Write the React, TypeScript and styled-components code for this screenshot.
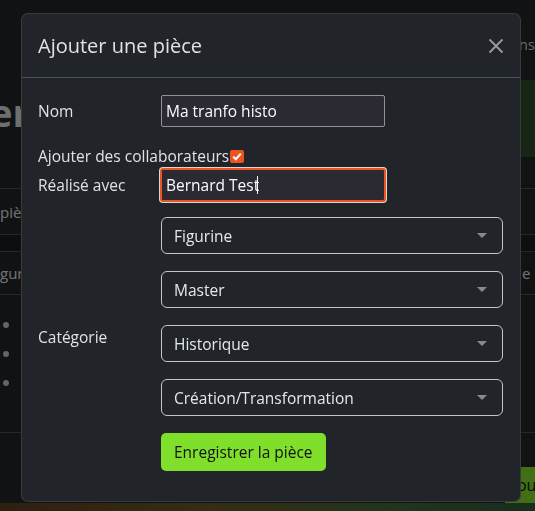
import React from 'react';
import styled, { createGlobalStyle } from 'styled-components';

const GlobalStyle = createGlobalStyle`
  html, body {
    margin: 0;
    background: #222428;
    font-family: "Open Sans", "Noto Sans", sans-serif;
    color: #dee2e6;
    overflow: hidden;
  }
  * { box-sizing: border-box; }
`;

/* ---------- page behind the modal ---------- */

const Page = styled.div`
  width: 535px;
  height: 511px;
  display: flex;
  flex-direction: column;
`;

const NavBar = styled.div`
  height: 80px;
  display: flex;
  justify-content: flex-end;
  padding-top: 34px;
  font-size: 15px;
  color: #d6d6d6;
`;

const Hero = styled.div`
  height: 109px;
  border-bottom: 1px solid #4a4e53;
  display: flex;
  align-items: flex-start;
  justify-content: space-between;
  padding-top: 6px;
  background: linear-gradient(90deg, transparent 94%, #2e4a2a 94%) top / 100% 77px no-repeat;
`;

const HeroTitle = styled.h1`
  margin: 0 0 0 -10px;
  font-size: 38px;
  line-height: 52px;
  font-weight: 700;
  color: #dcdcdc;
`;

const Row = styled.div<{ $h: number; $dark?: boolean }>`
  height: ${p => p.$h}px;
  border-bottom: 1px solid #4a4e53;
  display: flex;
  align-items: center;
  justify-content: space-between;
  font-size: 15px;
  color: #e6e6e6;
  background: ${p => (p.$dark ? '#1b1c1f' : 'transparent')};
`;

const Crumb = styled.span`
  margin-right: -8px;
`;

const List = styled.ul`
  height: 138px;
  margin: 0;
  padding: 22px 0 0 0;
  border-bottom: 1px solid #4a4e53;
  list-style: none;
  display: flex;
  flex-direction: column;
  gap: 13px;
`;

const Bullet = styled.li`
  display: flex;
  align-items: center;
  height: 16px;
  &::before {
    content: '';
    width: 6px;
    height: 6px;
    margin-left: 3px;
    border-radius: 50%;
    background: #c8c8c8;
  }
`;

const ActionRow = styled.div`
  height: 70px;
  display: flex;
  align-items: flex-end;
  justify-content: flex-end;
`;

const PageButton = styled.div`
  height: 36px;
  width: 80px;
  margin-right: -50px;
  background: #80df2a;
  color: #111;
  display: flex;
  align-items: center;
  padding-left: 4px;
  font-size: 16px;
`;

const PageFooter = styled.div`
  flex: 1;
  background: linear-gradient(90deg, #5e4022 0%, #6a5a2a 40%, #3f6a38 75%, #2f5a3c 100%);
`;

/* ---------- modal ---------- */

const Backdrop = styled.div`
  position: fixed;
  inset: 0;
  background: rgba(0, 0, 0, 0.5);
  padding: 13px 0 0 21px;
`;

const Dialog = styled.div`
  width: 500px;
  background: #212529;
  border: 1px solid rgba(255, 255, 255, 0.1);
  border-radius: 7px;
  font-size: 15.5px;
`;

const Header = styled.div`
  display: flex;
  align-items: center;
  justify-content: space-between;
  padding: 16px;
  border-bottom: 1px solid #495057;
`;

const Title = styled.h5`
  margin: 0;
  font-size: 20px;
  font-weight: 500;
  line-height: 31px;
  color: #dee2e6;
`;

const CloseButton = styled.button`
  width: 16px;
  height: 16px;
  padding: 0;
  margin-top: 1px;
  border: 0;
  background: none;
  display: flex;
  cursor: pointer;
`;

const Body = styled.form`
  padding: 17px 17px 30px 16px;
  display: flex;
  flex-direction: column;
`;

const FieldRow = styled.div<{ $top?: number }>`
  display: grid;
  grid-template-columns: 123px 1fr;
  align-items: center;
  margin-top: ${p => p.$top ?? 0}px;
`;

const Label = styled.label<{ $top?: number }>`
  line-height: 24px;
  color: #dee2e6;
  align-self: ${p => (p.$top !== undefined ? 'start' : 'center')};
  margin-top: ${p => p.$top ?? 0}px;
`;

const InputWrap = styled.div`
  position: relative;
  width: 224px;
`;

const TextInput = styled.input<{ $focused?: boolean }>`
  width: 224px;
  height: 32px;
  padding: 0 4px;
  font: inherit;
  color: #fbfbfe;
  background: #2b2a33;
  border: 1px solid ${p => (p.$focused ? '#e95420' : '#8f8f9d')};
  border-radius: 2px;
  box-shadow: ${p => (p.$focused ? '0 0 0 1px #e95420, 0 0 0 2px #d8d8d8' : 'none')};
  outline: none;
  caret-color: transparent;
`;

const Caret = styled.span<{ $x: number }>`
  position: absolute;
  left: ${p => p.$x}px;
  top: 7px;
  width: 1px;
  height: 18px;
  background: #fff;
  pointer-events: none;
`;

const CheckLine = styled.div`
  display: flex;
  align-items: center;
  margin-top: 17px;
  line-height: 24px;
`;

const CheckBox = styled.span`
  width: 14px;
  height: 13px;
  margin-left: 1px;
  margin-top: 1px;
  border-radius: 2px;
  background: #e95420;
  display: flex;
  align-items: center;
  justify-content: center;
`;

const SelectStack = styled.div`
  display: flex;
  flex-direction: column;
  gap: 17px;
`;

const Select = styled.div`
  height: 37px;
  border: 1px solid #c4c4c4;
  border-radius: 6px;
  padding: 0 15px 0 12px;
  display: flex;
  align-items: center;
  justify-content: space-between;
  color: #e4e8ec;

  &::after {
    content: '';
    border-left: 5px solid transparent;
    border-right: 5px solid transparent;
    border-top: 5px solid #8a8a8a;
  }
`;

const SubmitButton = styled.button`
  align-self: flex-start;
  height: 38px;
  padding: 0 13px;
  border: 0;
  border-radius: 5px;
  background: #80df2a;
  color: #111;
  font: inherit;
  cursor: pointer;
`;

const selects = ['Figurine', 'Master', 'Historique', 'Création/Transformation'];

const App: React.FC = () => {
  return (
    <>
      <GlobalStyle />
      <Page>
        <NavBar>Collections</NavBar>
        <Hero>
          <HeroTitle>er</HeroTitle>
        </Hero>
        <Row $h={46}>
          <span>pièces</span>
          <span />
        </Row>
        <Row $h={17} $dark />
        <Row $h={43}>
          <span>gurine</span>
          <Crumb>e &gt;</Crumb>
        </Row>
        <List>
          <Bullet />
          <Bullet />
          <Bullet />
        </List>
        <ActionRow>
          <PageButton>vous</PageButton>
        </ActionRow>
        <PageFooter />
      </Page>

      <Backdrop>
        <Dialog role="dialog">
          <Header>
            <Title>Ajouter une pièce</Title>
            <CloseButton type="button" aria-label="Fermer">
              <svg width="16" height="16" viewBox="0 0 16 16">
                <path d="M1.5 1.5 L14.5 14.5 M14.5 1.5 L1.5 14.5" stroke="#9a9a9a" strokeWidth="1.8" />
              </svg>
            </CloseButton>
          </Header>
          <Body onSubmit={e => e.preventDefault()}>
            <FieldRow>
              <Label>Nom</Label>
              <TextInput defaultValue="Ma tranfo histo" />
            </FieldRow>
            <CheckLine>
              Ajouter des collaborateurs
              <CheckBox>
                <svg width="10" height="9" viewBox="0 0 10 9">
                  <path d="M1.2 4.6 L3.8 7.2 L8.8 1.6" fill="none" stroke="#fff" strokeWidth="2" />
                </svg>
              </CheckBox>
            </CheckLine>
            <FieldRow $top={1}>
              <Label>Réalisé avec</Label>
              <InputWrap>
                <TextInput $focused defaultValue="Bernard Test" />
                <Caret $x={96} />
              </InputWrap>
            </FieldRow>
            <FieldRow $top={16}>
              <Label $top={108}>Catégorie</Label>
              <SelectStack>
                {selects.map(s => (
                  <Select key={s}>{s}</Select>
                ))}
                <SubmitButton type="submit">Enregistrer la pièce</SubmitButton>
              </SelectStack>
            </FieldRow>
          </Body>
        </Dialog>
      </Backdrop>
    </>
  );
};

export default App;
